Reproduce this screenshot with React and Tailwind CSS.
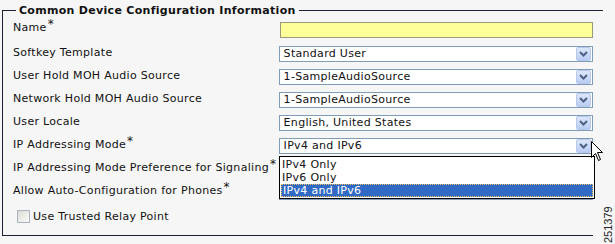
const rows = [
  { label: 'Softkey Template', value: 'Standard User' },
  { label: 'User Hold MOH Audio Source', value: '1-SampleAudioSource' },
  { label: 'Network Hold MOH Audio Source', value: '1-SampleAudioSource' },
  { label: 'User Locale', value: 'English, United States' },
  { label: 'IP Addressing Mode', value: 'IPv4 and IPv6', req: true },
  { label: 'IP Addressing Mode Preference for Signaling', value: '', req: true },
  { label: 'Allow Auto-Configuration for Phones', value: '', req: true },
]

const Star = () => <span className="relative top-[-3px] ml-[1px] text-[12px]">*</span>

const ArrowBtn = () => (
  <div className="flex h-[14px] w-[15px] items-center justify-center rounded-[2px] border border-[#b7c8ea] bg-gradient-to-b from-[#dde7fb] to-[#b9cdf3]">
    <svg width="9" height="6" viewBox="0 0 9 6">
      <path d="M1 1 L4.5 4.5 L8 1" fill="none" stroke="#4d6185" strokeWidth="2" />
    </svg>
  </div>
)

const Select = ({ value }) => (
  <div className="flex h-[16px] w-[316px] items-center justify-between border border-[#7f9db9] bg-white pl-[4px] pr-[1px]">
    <span className="leading-[14px]">{value}</span>
    <ArrowBtn />
  </div>
)

export default function App() {
  return (
    <div
      className="relative h-[244px] w-[615px] overflow-hidden bg-[#f6f6f6] text-[11px] tracking-[0.3px] text-[#111]"
      style={{ fontFamily: '"DejaVu Sans", Verdana, sans-serif' }}
    >
      {/* legend row */}
      <div className="flex h-[21px] w-[603px] items-start pl-[2px]">
        <div className="mt-[10px] h-px w-[14px] bg-[#1a2233]" />
        <span className="mx-[3px] mt-[4px] text-[11px] font-bold leading-[13px]">
          Common Device Configuration Information
        </span>
        <div className="mt-[10px] h-px flex-1 bg-[#1a2233]" />
      </div>

      <div className="ml-[2px] -mt-[11px] h-[226px] w-[591px] border-b border-l border-[#1a2233] pt-[11px]">
        <div className="flex h-[25px] items-start">
          <div className="w-[277px] pl-[10px] leading-[13px]">
            Name<Star />
          </div>
          <div className="mt-px h-[16px] w-[314px] border border-[#9a9a7a] bg-[#ffff99]" />
        </div>
        {rows.map(r => (
          <div key={r.label} className="flex h-[23px] items-start">
            <div className="w-[277px] whitespace-nowrap pl-[10px] leading-[13px]">
              {r.label}
              {r.req && <Star />}
            </div>
            <Select value={r.value} />
          </div>
        ))}
        <div className="mt-[3px] flex items-center pl-[14px]">
          <div className="h-[13px] w-[13px] border border-[#a9b4c2] bg-gradient-to-br from-[#dcdcd6] to-[#fbfbf9]" />
          <span className="ml-[3px] leading-[13px]">Use Trusted Relay Point</span>
        </div>
      </div>

      {/* open dropdown list */}
      <div className="absolute left-[279px] top-[156px] w-[316px] border border-black bg-white p-px leading-[13px]">
        <div className="h-[13px] pl-[1px]">IPv4 Only</div>
        <div className="h-[13px] pl-[1px]">IPv6 Only</div>
        <div className="h-[13px] border border-dotted border-[#f0c060] bg-[#316ac5] pl-[1px] leading-[11px] text-white">
          IPv4 and IPv6
        </div>
      </div>

      {/* mouse cursor */}
      <svg className="absolute left-[591px] top-[141px]" width="13" height="22" viewBox="0 0 13 22">
        <path
          d="M0.5 0.5 L0.5 16.5 L4.5 12.5 L7.5 19.5 L9.5 18.5 L6.5 11.5 L11.5 11.5 Z"
          fill="white"
          stroke="black"
          strokeWidth="1"
        />
      </svg>

      {/* figure number */}
      <div
        className="absolute left-[602px] top-[205px] origin-top-left -rotate-90 translate-y-[38px] text-[11px] leading-[12px] tracking-normal text-[#222]"
        style={{ fontFamily: '"Liberation Sans", Arial, sans-serif' }}
      >
        251379
      </div>
    </div>
  )
}
